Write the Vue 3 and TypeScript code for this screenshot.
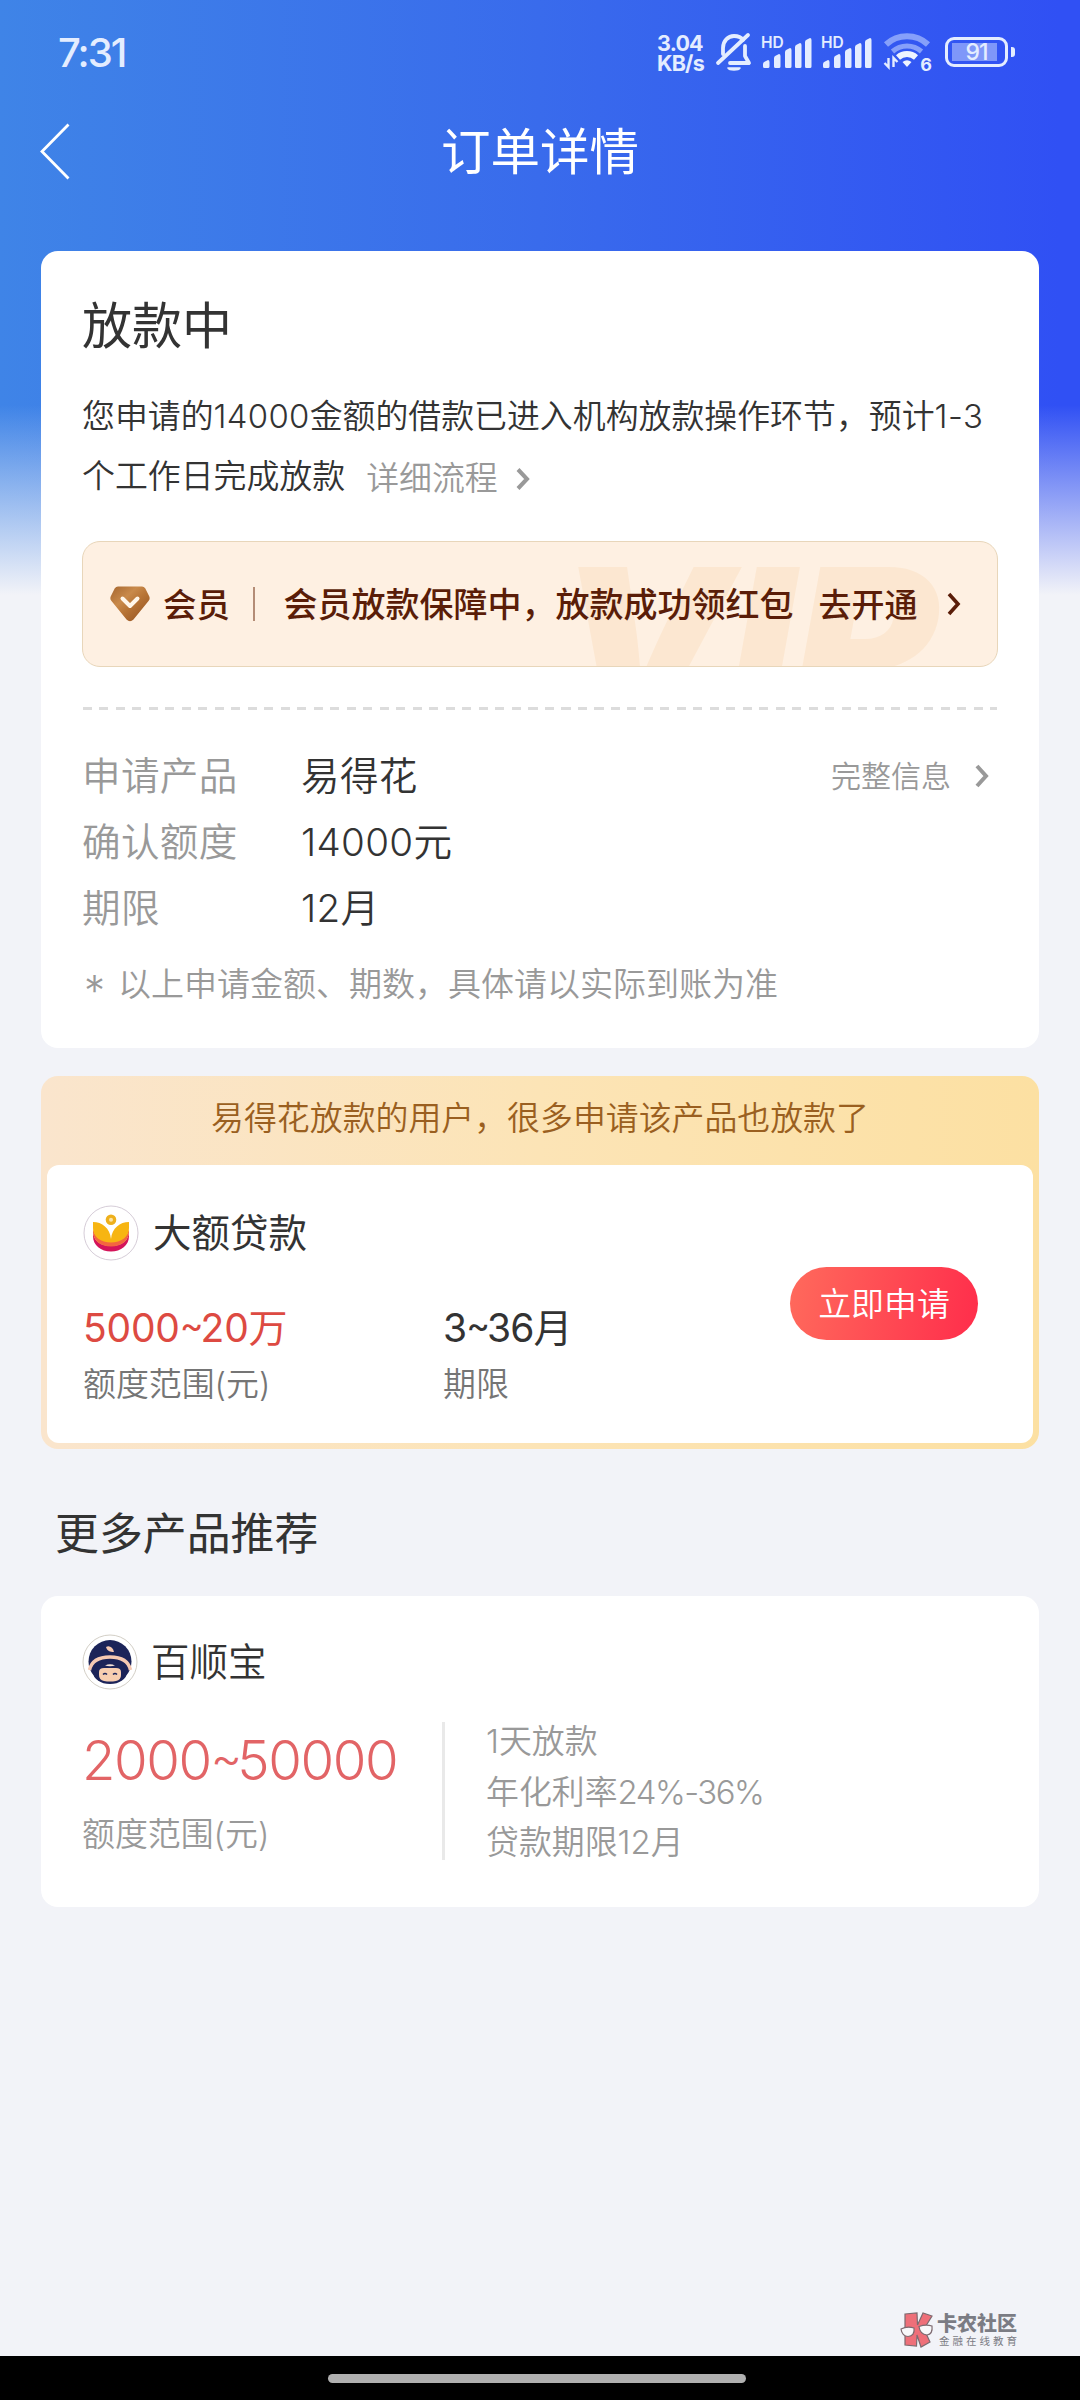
<script setup lang="ts">
interface InfoRow {
  label: string
  digits?: string
  text: string
}

interface Perk {
  text: string
  rate?: string
}

const infoRows: InfoRow[] = [
  { label: '申请产品', text: '易得花' },
  { label: '确认额度', digits: '14000', text: '元' },
  { label: '期限', digits: '12', text: '月' },
]

const perks: Perk[] = [
  { text: '1天放款' },
  { text: '年化利率', rate: '24%-36%' },
  { text: '贷款期限12月' },
]

const signalBars = [
  { x: 2, h: 8 },
  { x: 13, h: 14 },
  { x: 24, h: 20 },
  { x: 34, h: 25 },
  { x: 44, h: 30 },
]
</script>

<template>
  <div class="page" lang="zh-CN">
    <div class="statusbar">
      <span class="clock">7:31</span>
      <div class="status-icons">
        <div class="speed"><span>3.04</span><span>KB/s</span></div>
        <svg class="bell" width="38" height="40" viewBox="0 0 38 40" fill="none" stroke="#e4edff" stroke-width="3.8" stroke-linecap="round" stroke-linejoin="round">
          <path d="M8 22V16c0-7 5-12 11-12 4 0 7 1 9 4" />
          <path d="M30 14v10l4 7H15" />
          <path d="M33 3 3 31" />
          <path d="M13 36h12c-1.500 2.500-10.500 2.500-12 0z" fill="#e4edff" stroke-width="1.500" />
        </svg>
        <div v-for="n in 2" :key="n" class="signal">
          <span class="hd">HD</span>
          <svg width="52" height="34" viewBox="0 0 52 34" fill="#e4edff">
            <path
              v-for="b in signalBars"
              :key="b.x"
              :d="`M${b.x} ${33 - b.h + 4}q0-2 2-2.500l3-1.500q1.500 0 1.500 2V31.500q0 1.500-1.500 1.500h-3.500q-1.500 0-1.500-1.500z`"
            />
          </svg>
        </div>
        <div class="wifi">
          <svg width="50" height="38" viewBox="0 0 50 38" fill="none">
            <path d="M3 12.500a31 31 0 0 1 42 0" stroke="#86a0fa" stroke-width="6" />
            <path d="M9.500 19.500a22 22 0 0 1 29 0" stroke="#86a0fa" stroke-width="5" />
            <path d="M15 25.500a13.500 13.500 0 0 1 18 0" stroke="#eef4ff" stroke-width="6" />
            <path d="M24 35l-4.500-5q4.500-3.500 9 0z" fill="#eef4ff" />
            <path d="M5.500 26v9l-4-4M10.500 35v-9l4 4" stroke="#e4edff" stroke-width="2.400" />
          </svg>
          <span class="six">6</span>
        </div>
        <div class="battery"><span>91</span></div>
      </div>
    </div>

    <div class="navbar">
      <svg class="back" width="32" height="60" viewBox="0 0 32 60" fill="none" stroke="#fff" stroke-width="2.800">
        <path d="M29.500 2.500 3 29.500l26.500 27" />
      </svg>
      <h1>订单详情</h1>
    </div>

    <main>
      <section class="card order">
        <h2>放款中</h2>
        <p class="desc">
          您申请的<span class="n1">14000</span>金额的借款已进入机构放款操作环节，预计<span class="n2">1-3</span><br />个工作日完成放款<a class="more">详细流程<svg width="14" height="24" viewBox="0 0 14 24" fill="none" stroke="#999" stroke-width="4"><path d="M2 2.500 11 12 2 21.500" /></svg></a>
        </p>

        <div class="vip">
          <span class="vip-mark" aria-hidden="true">VIP</span>
          <svg class="gem" width="40" height="36" viewBox="0 0 40 36">
            <defs>
              <linearGradient id="gem" x1="0" y1="0" x2="1" y2="1">
                <stop offset="0" stop-color="#a5662f" />
                <stop offset="0.350" stop-color="#c98a4b" />
                <stop offset="0.550" stop-color="#b77436" />
                <stop offset="1" stop-color="#8f4d1e" />
              </linearGradient>
            </defs>
            <path d="M8 .5h24q2 0 3.200 1.800l4 8q1.200 2.500-.7 4.700L23.500 33.500q-3.500 3.500-7 0L1.500 15q-1.900-2.200-.7-4.700l4-8Q6 .5 8 .5z" fill="url(#gem)" />
            <path d="M12.500 12.500 20 20l7.500-7.500" fill="none" stroke="#fff6ea" stroke-width="4" stroke-linecap="round" stroke-linejoin="round" />
          </svg>
          <span class="member">会员</span>
          <i class="bar"></i>
          <span class="promise">会员放款保障中，放款成功领红包</span>
          <span class="open">去开通</span>
          <svg class="go" width="14" height="24" viewBox="0 0 14 24" fill="none" stroke="#5a1d08" stroke-width="3.600"><path d="M2 2 11 12 2 22" /></svg>
        </div>

        <div class="dashes"></div>

        <div class="info">
          <dl>
            <div v-for="row in infoRows" :key="row.label" class="info-row">
              <dt>{{ row.label }}</dt>
              <dd><span v-if="row.digits" class="digits">{{ row.digits }}</span>{{ row.text }}</dd>
            </div>
          </dl>
          <a class="full"><span>完整信息</span><svg width="14" height="24" viewBox="0 0 14 24" fill="none" stroke="#999" stroke-width="4"><path d="M2 2 11 12 2 22" /></svg></a>
        </div>
        <p class="note"><span class="star">*</span>以上申请金额、期数，具体请以实际到账为准</p>
      </section>

      <section class="promo">
        <p class="promo-title">易得花放款的用户，很多申请该产品也放款了</p>
        <div class="promo-body">
          <div class="brand">
            <svg width="56" height="56" viewBox="0 0 56 56">
              <circle cx="28" cy="28" r="27" fill="#fff" stroke="#d6cdd8" />
              <path d="M10 26C10 36 18 41 28 41S46 36 46 26V31C46 40.500 38 46.500 28 46.500S10 40.500 10 31z" fill="#d4145a" />
              <path d="M10 22C10 31 18 36.500 28 36.500S46 31 46 22V27C46 36 38 41.500 28 41.500S10 36 10 27z" fill="#f4663f" />
              <path d="M10 17C19 17 27 23 28 34 29 23 37 17 46 17V23C46 32 38 37.500 28 37.500S10 32 10 23z" fill="#f7b512" />
              <circle cx="28" cy="14.700" r="5.300" fill="#eeb01c" />
              <circle cx="28" cy="14.700" r="2" fill="#fbe3a6" />
            </svg>
            <span>大额贷款</span>
          </div>
          <div class="offer">
            <div class="col amount">
              <strong>5000<span class="tilde">~</span>20万</strong>
              <small>额度范围(元)</small>
            </div>
            <div class="col term">
              <strong>3<span class="tilde">~</span>36月</strong>
              <small>期限</small>
            </div>
          </div>
          <button type="button" class="apply">立即申请</button>
        </div>
      </section>

      <h3>更多产品推荐</h3>

      <section class="card product">
        <div class="brand">
          <svg width="56" height="56" viewBox="0 0 56 56">
            <circle cx="28" cy="28" r="27" fill="#fff" stroke="#d3cfc6" />
            <circle cx="28" cy="27.500" r="21.500" fill="#1c2459" />
            <path d="M24 13c3-2 7 0 8 5-4 0-7-1-8-5z" fill="#f6c9b2" />
            <path d="M7.500 36C9.500 27 17 23 28 23s18.500 4 20.500 13" fill="none" stroke="#f6c9b2" stroke-width="3.500" />
            <ellipse cx="28" cy="38" rx="17" ry="12" fill="#1c2459" />
            <path d="M17 38q0-4 5-4h12q5 0 5 4v3q0 5-5 6-6 1-12 0-5-1-5-6z" fill="#f8ceb0" />
            <path d="M23 31.500q5-2.500 10 0-5 1.500-10 0z" fill="#f6e4da" />
            <path d="M21 40.500q2-2 4 0M31 40.500q2-2 4 0" fill="none" stroke="#1c2459" stroke-width="1.500" />
          </svg>
          <span>百顺宝</span>
        </div>
        <div class="product-body">
          <div class="range">
            <strong>2000<span class="tilde">~</span>50000</strong>
            <small>额度范围(元)</small>
          </div>
          <ul>
            <li v-for="p in perks" :key="p.text">{{ p.text }}<span v-if="p.rate" class="rate">{{ p.rate }}</span></li>
          </ul>
        </div>
      </section>
    </main>

    <footer>
      <svg width="34" height="36" viewBox="0 0 34 36">
        <path d="M5 2l12-1 .5 12L23 1l9 3-8 13 6 13-9 5-4-12-.5 11L5 33z" fill="#ee6f79" stroke="#7d6a70" stroke-width="1.200" />
        <path d="M1 17q6-3 13-1 1 8-6 8.500-6-.5-7-7.500zM19 14.500q7-2.500 13-.5 1 8-5 9-7-.5-8-8.500z" fill="#f8f8fa" stroke="#7d6a70" stroke-width="1.200" />
      </svg>
      <div class="forum">
        <b>卡农社区</b>
        <span>金融在线教育</span>
      </div>
    </footer>
    <div class="gesture"><i></i></div>
  </div>
</template>

<style>
body {
  background: #f2f3f8;
}
</style>

<style scoped>
* {
  box-sizing: border-box;
  margin: 0;
  padding: 0;
}

.page {
  display: flex;
  flex-direction: column;
  width: 1080px;
  height: 2400px;
  overflow: hidden;
  color: #333;
  font-family: Inter, 'Noto Sans CJK SC', sans-serif;
  font-weight: 350;
  white-space: nowrap;
  background:
    linear-gradient(to bottom, rgba(242, 243, 248, 0) 405px, #f2f3f8 595px),
    linear-gradient(to right, #3f84e7 0, #396bec 540px, #3050f4 1060px);
}

/* status bar */
.statusbar {
  display: flex;
  justify-content: space-between;
  height: 96px;
  padding: 32px 65px 0 58px;
  color: #e4edff;
}
.clock {
  font-size: 40px;
  font-weight: 550;
  line-height: 42px;
  letter-spacing: -2px;
}
.status-icons {
  display: flex;
  align-items: flex-start;
}
.speed {
  display: flex;
  flex-direction: column;
  width: 58px;
  padding-top: 2px;
  font-size: 21.5px;
  font-weight: 700;
  line-height: 19.5px;
  letter-spacing: -0.8px;
}
.bell {
  margin-right: 8px;
}
.signal {
  position: relative;
  width: 52px;
  height: 40px;
  margin-right: 8px;
  padding-top: 3px;
}
.hd {
  position: absolute;
  top: 2px;
  left: 0;
  font-size: 15.5px;
  font-weight: 600;
  line-height: 18px;
}
.wifi {
  position: relative;
  width: 50px;
  margin-left: 2px;
  margin-right: 12px;
}
.six {
  position: absolute;
  right: 1px;
  top: 23px;
  font-size: 18px;
  font-weight: 700;
  line-height: 20px;
}
.battery {
  position: relative;
  width: 63px;
  height: 30px;
  margin: 5px 7px 0 0;
  border: 3px solid #e4edff;
  border-radius: 9px;
  background: linear-gradient(#7f97f9, #7f97f9) 4px 3px / 45px 18px no-repeat;
  font-size: 23px;
  font-weight: 500;
  line-height: 25px;
  text-align: center;
  letter-spacing: -1px;
}
.battery::after {
  content: '';
  position: absolute;
  top: 7px;
  right: -10px;
  width: 4px;
  height: 10px;
  border-radius: 0 3px 3px 0;
  background: #e4edff;
}

/* navigation */
.navbar {
  display: flex;
  align-items: center;
  height: 155px;
  padding: 0 39px 43px;
}
.navbar h1 {
  flex: 1;
  margin-right: 32px;
  color: #fff;
  font-size: 49.5px;
  font-weight: 400;
  line-height: 60px;
  text-align: center;
}

main {
  display: flex;
  flex-direction: column;
  padding: 0 41px;
}
.card {
  border-radius: 17px;
  background: #fff;
}

/* order */
.order {
  height: 797px;
  padding: 45px 41px 0 41px;
}
h2 {
  font-size: 50px;
  font-weight: 400;
  line-height: 60px;
}
.desc {
  margin-top: 30px;
  font-size: 32.9px;
  line-height: 60px;
}
.n1 {
  letter-spacing: 0.3px;
}
.n2 {
  letter-spacing: 0.5px;
}
.more {
  position: relative;
  top: 2px;
  margin-left: 21px;
  color: #999;
}
.more svg {
  margin-left: 18px;
  vertical-align: -1px;
}
.vip {
  position: relative;
  display: flex;
  align-items: center;
  width: 916px;
  height: 126px;
  margin-top: 35px;
  padding-left: 27px;
  overflow: hidden;
  border: 1.5px solid #e8d6ba;
  border-radius: 18px;
  background: #fef0e2;
  color: #5a1d08;
  font-size: 34px;
  font-weight: 500;
}
.vip > * {
  flex: none;
}
.vip > :not(.vip-mark) {
  z-index: 1;
}
.vip .vip-mark {
  position: absolute;
  left: 474px;
  top: -2px;
  color: #fce7d1;
  font-size: 200px;
  font-style: italic;
  font-weight: 900;
  line-height: 200px;
  transform: scaleX(1.09);
  transform-origin: left;
}
.member,
.promise,
.open {
  padding-bottom: 3px;
}
.member {
  margin-left: 13px;
  font-size: 33.5px;
}
.bar {
  width: 1.5px;
  height: 34px;
  margin: 0 29px 0 23px;
  background: #b48c76;
}
.open {
  margin-left: 25px;
  font-size: 33px;
}
.go {
  margin-left: 29px;
}
.dashes {
  height: 3px;
  margin: 40px 1px 0 1px;
  background: repeating-linear-gradient(to right, #dcdcdc 0 9px, transparent 9px 16.5px);
}
.info {
  display: flex;
  justify-content: space-between;
  margin-top: 33px;
  padding-right: 9px;
}
.info-row {
  display: flex;
  height: 66px;
  font-size: 38.6px;
  line-height: 66px;
}
dt {
  width: 219px;
  color: #999;
  letter-spacing: 0.3px;
}
dd {
  letter-spacing: 0.3px;
}
.digits {
  letter-spacing: 0.3px;
}
.full {
  display: flex;
  align-items: center;
  height: 66px;
  color: #999;
  font-size: 30px;
}
.full span {
  padding-bottom: 5px;
}
.full svg {
  margin-left: 24px;
}
.note {
  margin-top: 13px;
  color: #999;
  font-size: 33px;
  line-height: 60px;
}
.star {
  display: inline-block;
  width: 36px;
  height: 40px;
  padding-left: 2px;
  font-size: 42px;
  line-height: 74px;
  vertical-align: top;
}

/* promoted product */
.promo {
  height: 373px;
  margin-top: 28px;
  padding: 0 6px 6px;
  border-radius: 17px;
  background: linear-gradient(to right, #fae5cd, #fce4b6 50%, #fce0a2);
}
.promo-title {
  height: 89px;
  color: #9a5f20;
  font-size: 32.9px;
  line-height: 84px;
  text-align: center;
}
.promo-body {
  display: grid;
  grid-template-columns: 1fr 188px;
  grid-template-rows: 56px 1fr;
  height: 278px;
  padding: 40px 55px 0 36px;
  border-radius: 12px;
  background: #fff;
}
.brand {
  display: flex;
  align-items: center;
  gap: 14px;
  height: 56px;
  font-size: 38.5px;
  line-height: 56px;
}
.product .brand {
  gap: 13px;
}
.product .brand span {
  padding-bottom: 1px;
}
.promo .brand {
  font-weight: 400;
}
.offer {
  grid-row: 2;
  display: flex;
  padding-top: 36px;
}
.col {
  display: flex;
  flex-direction: column;
}
.amount {
  width: 360px;
}
.col strong {
  font-size: 39px;
  font-weight: 430;
  line-height: 62px;
  letter-spacing: -0.2px;
}
.tilde {
  position: relative;
  top: -4px;
}
.col .tilde {
  font-size: 36px;
  letter-spacing: -3px;
}
.term strong {
  letter-spacing: -0.9px;
}
.amount strong {
  color: #dd4a42;
}
.col small {
  color: #757575;
  font-size: 32.9px;
  line-height: 49px;
}
.apply {
  grid-column: 2;
  grid-row: 1 / 3;
  height: 73px;
  margin-top: 62px;
  border: 0;
  border-radius: 37px;
  background: linear-gradient(100deg, #ff6a5c, #ff2d4b);
  color: #fff;
  font: inherit;
  font-size: 32.9px;
  line-height: 70px;
}

h3 {
  margin: 55px 0 32px 14px;
  font-size: 43.9px;
  font-weight: 400;
  line-height: 60px;
}

/* recommended product */
.product {
  height: 311px;
  padding: 38px 41px 0;
}
.product-body {
  display: flex;
  margin-top: 32px;
}
.range {
  display: flex;
  flex-direction: column;
  width: 363px;
  height: 138px;
  border-right: 3px solid #e9e9e9;
}
.range strong {
  height: 76px;
  color: #e26466;
  font-size: 54.5px;
  font-weight: 350;
  line-height: 76px;
  letter-spacing: -1.4px;
}
.range .tilde {
  top: -5px;
  font-size: 48px;
  letter-spacing: -5px;
}
.range small {
  margin-top: 11px;
  color: #999;
  font-size: 32.9px;
  line-height: 50px;
}
ul {
  margin: -6px 0 0 41px;
  list-style: none;
  color: #999;
  font-size: 32.9px;
  line-height: 50.5px;
}
.rate {
  letter-spacing: -1.5px;
}

/* forum mark */
footer {
  display: flex;
  gap: 3px;
  height: 44px;
  margin-top: auto;
  padding-left: 900px;
}
.forum {
  display: flex;
  flex-direction: column;
  padding-top: 1px;
  color: #7b7c84;
}
.forum b {
  font-size: 20px;
  font-weight: 900;
  line-height: 22px;
}
.forum span {
  padding-left: 2px;
  font-size: 10.5px;
  font-weight: 400;
  letter-spacing: 3px;
  line-height: 13px;
}
.gesture {
  display: flex;
  justify-content: center;
  height: 44px;
  padding: 18px 6px 0 0;
  background: #000;
}
.gesture i {
  width: 418px;
  height: 9px;
  border-radius: 5px;
  background: #b0b0b0;
}
</style>
